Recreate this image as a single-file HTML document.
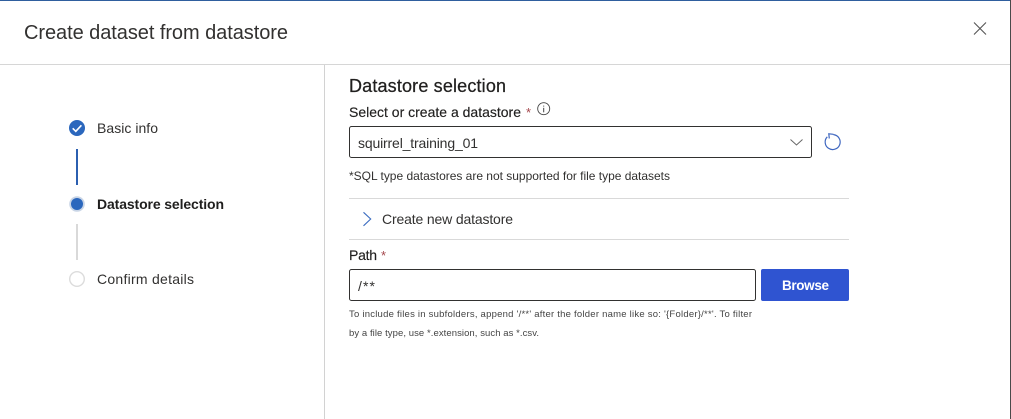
<!DOCTYPE html>
<html>
<head>
<meta charset="utf-8">
<style>
html,body{margin:0;padding:0;width:1011px;height:419px;overflow:hidden;background:#fff}
svg{display:block}
text{font-family:"Liberation Sans",Arial,sans-serif;fill:#201f1e}
</style>
</head>
<body>
<svg width="1011" height="419" viewBox="0 0 1011 419" xmlns="http://www.w3.org/2000/svg">
<rect width="1011" height="419" fill="#fff"/>
<rect x="0" y="0" width="1011" height="1" fill="#2f5f9e"/>
<rect x="1010" y="0" width="1" height="419" fill="#4a4a4a"/>

<text x="24" y="39" font-size="20" textLength="264" lengthAdjust="spacing" style="fill:#323130">Create dataset from datastore</text>
<path d="M974 22.500L986 34.500M986 22.500L974 34.500" stroke="#555" stroke-width="1.100" fill="none"/>
<rect x="0" y="64" width="1010" height="1" fill="#d6d6d6"/>
<rect x="324" y="65" width="1" height="354" fill="#d2d2d2"/>

<circle cx="77" cy="128" r="8" fill="#2b67bd"/>
<path d="M72.700 128.300L75.800 131.300L81.400 125.300" stroke="#fff" stroke-width="1.600" fill="none"/>
<text x="97" y="133" font-size="14" textLength="61" lengthAdjust="spacing" style="fill:#323130">Basic info</text>
<rect x="76" y="149" width="2" height="36" fill="#2b5fb0"/>

<circle cx="77" cy="204" r="7.800" fill="#c9d5e6"/>
<circle cx="77" cy="204" r="6" fill="#2b67bd"/>
<text x="97" y="209" font-size="14" font-weight="700" textLength="127" lengthAdjust="spacing">Datastore selection</text>
<rect x="76" y="224" width="2" height="36" fill="#d9d9d9"/>

<circle cx="77" cy="279" r="7.300" fill="#fff" stroke="#dcdcdc" stroke-width="1.400"/>
<text x="97" y="284" font-size="14" textLength="97" lengthAdjust="spacing" style="fill:#323130">Confirm details</text>

<text x="349" y="92" font-size="18" textLength="157" lengthAdjust="spacing" stroke="#201f1e" stroke-width="0.250">Datastore selection</text>
<text x="349" y="117" font-size="14" textLength="172" lengthAdjust="spacing" stroke="#201f1e" stroke-width="0.150">Select or create a datastore</text>
<text x="526" y="117" font-size="13" style="fill:#a4474c">*</text>
<circle cx="543.700" cy="108.700" r="6" fill="none" stroke="#444" stroke-width="0.900"/>
<rect x="543.200" y="107.800" width="1" height="4.500" fill="#444"/>
<rect x="543.200" y="105.600" width="1" height="1" fill="#444"/>

<rect x="349.500" y="126.500" width="462" height="31" rx="2" fill="#fff" stroke="#323130" stroke-width="1"/>
<text x="358" y="148" font-size="14" textLength="120" lengthAdjust="spacing" style="fill:#323130">squirrel_training_01</text>
<path d="M790.500 139.500L796.500 145L802.500 139.500" stroke="#666" stroke-width="1" fill="none"/>
<path d="M833.500 134.600A7.500 7.500 0 1 1 827.300 136.800" stroke="#3f67c0" stroke-width="1.200" fill="none"/>
<path d="M833.500 134.300L828.800 133.800L829.300 138.500" stroke="#3f67c0" stroke-width="1.200" fill="none"/>

<text x="349" y="180" font-size="12" textLength="321" lengthAdjust="spacing" style="fill:#323130">*SQL type datastores are not supported for file type datasets</text>

<rect x="349" y="198" width="500" height="1" fill="#d9d9d9"/>
<path d="M363.500 212.300L370.700 219L363.500 225.800" stroke="#3a6cc0" stroke-width="1.100" fill="none"/>
<text x="382" y="224" font-size="14" textLength="131" lengthAdjust="spacing" style="fill:#323130">Create new datastore</text>
<rect x="349" y="239" width="500" height="1" fill="#d9d9d9"/>

<text x="349" y="260" font-size="14" textLength="28" lengthAdjust="spacing" stroke="#201f1e" stroke-width="0.150">Path</text>
<text x="381" y="260" font-size="13" style="fill:#a4474c">*</text>

<rect x="349.500" y="269.500" width="406" height="31" rx="2" fill="#fff" stroke="#323130" stroke-width="1"/>
<text x="358" y="291" font-size="14" textLength="17" lengthAdjust="spacing" style="fill:#323130">/**</text>

<rect x="761" y="269" width="88" height="32" rx="2" fill="#2f54d1"/>
<text x="782" y="290" font-size="13.500" font-weight="700" textLength="47" lengthAdjust="spacing" style="fill:#fff">Browse</text>

<text x="349" y="317" font-size="9.500" textLength="403" lengthAdjust="spacing" style="fill:#444">To include files in subfolders, append '/**' after the folder name like so: '{Folder}/**'. To filter</text>
<text x="349" y="336" font-size="9.500" textLength="190" lengthAdjust="spacing" style="fill:#444">by a file type, use *.extension, such as *.csv.</text>
</svg>
</body>
</html>
